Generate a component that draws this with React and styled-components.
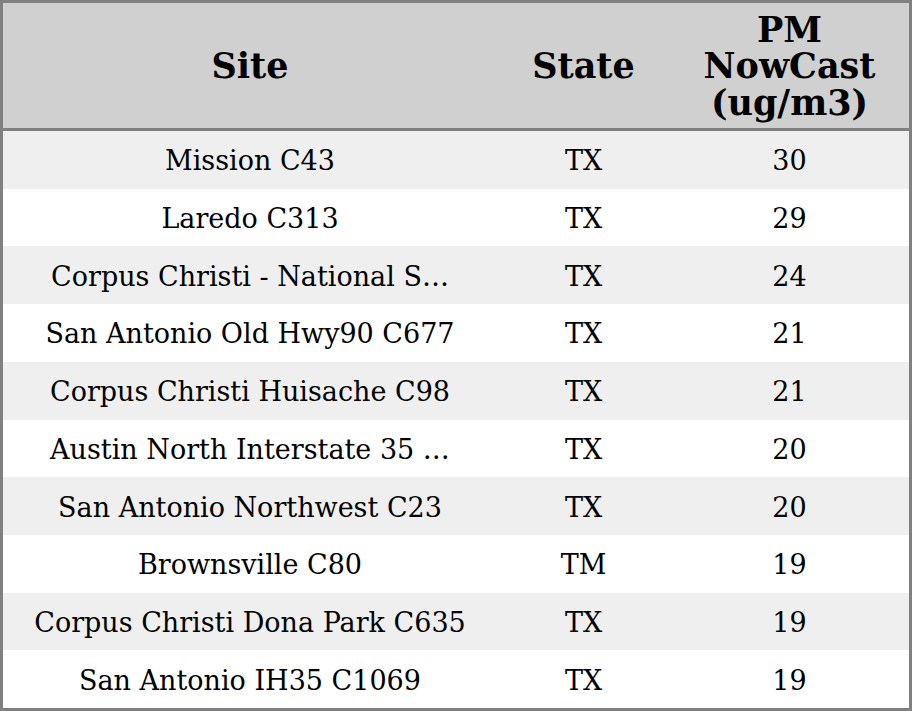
import React from 'react';
import styled, { createGlobalStyle } from 'styled-components';

const GlobalStyle = createGlobalStyle`
    html, body {
        margin: 0;
        padding: 0;
        background: #ffffff;
    }
    body {
        font-family: "DejaVu Serif", serif;
        color: #000000;
    }
`;

const Table = styled.div`
    box-sizing: border-box;
    width: 912px;
    height: 711px;
    border: 3px solid #808080;
    display: flex;
    flex-direction: column;
    overflow: hidden;
`;

const HeaderRow = styled.div`
    display: grid;
    grid-template-columns: 494px 173px 1fr;
    height: 125px;
    background-color: #d0d0d0;
    border-bottom: 3px solid #808080;
`;

const HeaderCell = styled.div`
    display: flex;
    align-items: center;
    justify-content: center;
    text-align: center;
    font-weight: bold;
    font-size: 35px;
    line-height: 1.04;
    padding-top: 2px;
`;

const Row = styled.div`
    display: grid;
    grid-template-columns: 494px 173px 1fr;
    flex: 1;
    background-color: ${props => props.shaded ? '#efefef' : '#ffffff'};
`;

const Cell = styled.div`
    display: flex;
    align-items: center;
    justify-content: center;
    font-size: 27px;
    white-space: nowrap;
    padding-top: 2px;
`;

const rows = [
    { site: 'Mission C43', state: 'TX', value: 30 },
    { site: 'Laredo C313', state: 'TX', value: 29 },
    { site: 'Corpus Christi - National S…', state: 'TX', value: 24 },
    { site: 'San Antonio Old Hwy90 C677', state: 'TX', value: 21 },
    { site: 'Corpus Christi Huisache C98', state: 'TX', value: 21 },
    { site: 'Austin North Interstate 35 …', state: 'TX', value: 20 },
    { site: 'San Antonio Northwest C23', state: 'TX', value: 20 },
    { site: 'Brownsville C80', state: 'TM', value: 19 },
    { site: 'Corpus Christi Dona Park C635', state: 'TX', value: 19 },
    { site: 'San Antonio IH35 C1069', state: 'TX', value: 19 },
];

const App = () => {
    return (
        <>
            <GlobalStyle />
            <Table>
                <HeaderRow>
                    <HeaderCell>Site</HeaderCell>
                    <HeaderCell>State</HeaderCell>
                    <HeaderCell>PM<br />NowCast<br />(ug/m3)</HeaderCell>
                </HeaderRow>
                {rows.map((row, i) => (
                    <Row key={row.site} shaded={i % 2 === 0}>
                        <Cell>{row.site}</Cell>
                        <Cell>{row.state}</Cell>
                        <Cell>{row.value}</Cell>
                    </Row>
                ))}
            </Table>
        </>
    );
};

export default App;
